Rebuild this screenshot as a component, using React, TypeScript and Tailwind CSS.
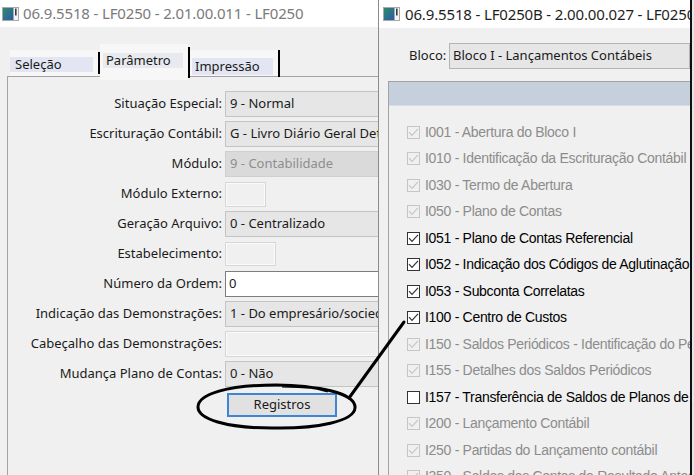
import React from "react";

type Row = {
  label: string;
  kind: "combo" | "disabled" | "box" | "text" | "blank";
  value?: string;
  box?: string;
};

const ROWS: Row[] = [
  { label: "Situação Especial:", kind: "combo", value: "9 - Normal" },
  { label: "Escrituração Contábil:", kind: "combo", value: "G - Livro Diário Geral Detalhado" },
  { label: "Módulo:", kind: "disabled", value: "9 - Contabilidade" },
  { label: "Módulo Externo:", kind: "box", box: "w-[41px] h-[25px]" },
  { label: "Geração Arquivo:", kind: "combo", value: "0 - Centralizado" },
  { label: "Estabelecimento:", kind: "box", box: "w-[51px] h-[24px]" },
  { label: "Número da Ordem:", kind: "text", value: "0" },
  { label: "Indicação das Demonstrações:", kind: "combo", value: "1 - Do empresário/sociedade" },
  { label: "Cabeçalho das Demonstrações:", kind: "blank" },
  { label: "Mudança Plano de Contas:", kind: "combo", value: "0 - Não" },
];

type State = "on" | "off" | "dis";

const ITEMS: [string, State][] = [
  ["I001 - Abertura do Bloco I", "dis"],
  ["I010 - Identificação da Escrituração Contábil", "dis"],
  ["I030 - Termo de Abertura", "dis"],
  ["I050 - Plano de Contas", "dis"],
  ["I051 - Plano de Contas Referencial", "on"],
  ["I052 - Indicação dos Códigos de Aglutinação", "on"],
  ["I053 - Subconta Correlatas", "on"],
  ["I100 - Centro de Custos", "on"],
  ["I150 - Saldos Periódicos - Identificação do Período", "dis"],
  ["I155 - Detalhes dos Saldos Periódicos", "dis"],
  ["I157 - Transferência de Saldos de Planos de Contas Anteriores", "off"],
  ["I200 - Lançamento Contábil", "dis"],
  ["I250 - Partidas do Lançamento contábil", "dis"],
  ["I350 - Saldos das Contas de Resultado Antes do Encerramento", "dis"],
];

function AppIcon() {
  return (
    <svg width="17" height="14" viewBox="0 0 17 14" className="shrink-0">
      <defs>
        <linearGradient id="ic" x1="0" y1="0" x2="1" y2="1">
          <stop offset="0" stopColor="#2e8a6a" />
          <stop offset="1" stopColor="#2c5aa6" />
        </linearGradient>
      </defs>
      <rect x="0.5" y="0.5" width="16" height="13" fill="#f4f4f4" stroke="#a8a8a8" />
      <rect x="1" y="1" width="10.5" height="12" fill="url(#ic)" />
      <rect x="13" y="1.5" width="1.6" height="7" fill="#3a3a3a" />
    </svg>
  );
}

function Check({ state }: { state: State }) {
  const dis = state === "dis";
  return (
    <span
      className={
        dis
          ? "flex h-[13px] w-[13px] shrink-0 items-center justify-center border border-[#c6c6c6] bg-[#f0f0f0]"
          : "flex h-[13px] w-[13px] shrink-0 items-center justify-center border border-[#333] bg-white"
      }
    >
      {state !== "off" && (
        <svg width="11" height="11" viewBox="0 0 11 11">
          <polyline
            points="1,5.2 4,8.4 10,1.8"
            fill="none"
            stroke={dis ? "#c6c6c6" : "#333"}
            strokeWidth="1.2"
          />
        </svg>
      )}
    </span>
  );
}

function Field({ row }: { row: Row }) {
  switch (row.kind) {
    case "combo":
      return (
        <div className="flex h-[26px] w-[170px] items-center whitespace-nowrap border border-[#c4c4c4] bg-[#e6e6e6] pl-[4px] text-[#1a1a1a]">
          {row.value}
        </div>
      );
    case "disabled":
      return (
        <div className="flex h-[26px] w-[170px] items-center whitespace-nowrap border border-[#cfcfcf] bg-[#dadada] pl-[4px] text-[#8e8e8e]">
          {row.value}
        </div>
      );
    case "text":
      return (
        <div className="flex h-[26px] w-[170px] items-center border border-[#7d7d7d] bg-white pl-[3px] text-[#1a1a1a]">
          {row.value}
        </div>
      );
    case "blank":
      return (
        <div className="h-[26px] w-[170px] border border-[#d6d6d6] bg-[#f0f0f0] shadow-[inset_0_0_0_1px_#fafafa]" />
      );
    default:
      return (
        <div
          className={`${row.box} border border-[#d6d6d6] bg-[#f0f0f0] shadow-[inset_0_0_0_1px_#fafafa]`}
        />
      );
  }
}

function LeftWindow() {
  return (
    <div className="flex h-full w-[378px] shrink-0 flex-col overflow-hidden bg-[#f0f0f0] font-['Noto_Sans',sans-serif] text-[13px] text-[#1a1a1a]">
      <div className="flex h-[27px] shrink-0 items-center gap-[4px] bg-white pl-[2px]">
        <AppIcon />
        <span className="whitespace-nowrap text-[15px] tracking-[-0.15px] text-[#7a7a7a]">
          06.9.5518 - LF0250 - 2.01.00.011 - LF0250
        </span>
      </div>

      <div className="flex h-[49px] shrink-0 items-end pl-[10px]">
        <div className="h-[26px] w-[88px] bg-[#f7f7f7] pt-[7px]">
          <div className="h-[15px] w-[83px] bg-[#e3e6f2] pl-[5px] leading-[15px]">Seleção</div>
        </div>
        <div className="mb-[2px] h-[22px] w-[2px] bg-black" />
        <div className="relative z-10 -mb-[4px] h-[36px] w-[88px] bg-[#f7f7f7] pl-[3px] pt-[9px]">
          <div className="h-[15px] w-[80px] bg-[#e8eaef] pl-[3px] leading-[15px]">Parâmetro</div>
        </div>
        <div className="relative z-10 -mb-[2px] h-[31px] w-[2px] bg-black" />
        <div className="h-[26px] w-[88px] bg-[#f7f7f7] pl-[2px] pt-[8px]">
          <div className="h-[17px] w-[81px] bg-[#e3e6f2] pl-[3px] leading-[17px]">Impressão</div>
        </div>
        <div className="relative z-10 -mb-[1px] h-[27px] w-[2px] bg-black" />
      </div>

      <div className="ml-[7px] flex-1 border-l border-t border-[#a3a3a3] pt-[14px]">
        <div className="grid grid-cols-[214px_auto] gap-x-[3px] gap-y-[4px]">
          {ROWS.map((r) => (
            <React.Fragment key={r.label}>
              <div className="flex h-[26px] items-center justify-end whitespace-nowrap">{r.label}</div>
              <div className="flex items-center">
                <Field row={r} />
              </div>
            </React.Fragment>
          ))}
          <div />
          <div className="pl-[2px] pt-[2px]">
            <div className="flex h-[24px] w-[110px] items-center justify-center border-2 border-[#3c86d4] bg-[#e1e1e1]">
              Registros
            </div>
          </div>
        </div>
      </div>
    </div>
  );
}

function RightWindow() {
  return (
    <div className="flex h-full w-[312px] shrink-0 flex-col overflow-hidden border-l border-[#8c8c8c] bg-[#f0f0f0] font-['Noto_Sans',sans-serif] text-[13px] text-[#1a1a1a]">
      <div className="flex h-[28px] shrink-0 items-center gap-[5px] bg-white pl-[4px]">
        <AppIcon />
        <span className="whitespace-nowrap text-[15px] tracking-[-0.15px] text-[#1e1e1e]">
          06.9.5518 - LF0250B - 2.00.00.027 - LF0250
        </span>
      </div>

      <div className="mt-[15px] flex h-[26px] shrink-0 items-center pl-[30px]">
        <span className="w-[40px] shrink-0">Bloco:</span>
        <div className="flex h-[26px] flex-1 items-center whitespace-nowrap border border-[#b4b4b4] bg-[#e6e6e6] pl-[3px]">
          Bloco I - Lançamentos Contábeis
        </div>
      </div>

      <div className="ml-[9px] mt-[12px] flex-1 border-l border-t border-[#a3a3a3]">
        <div className="h-[24px] border-b border-[#d6dde5] bg-[#c5d0dc]" />
        <div className="flex flex-col pl-[18px] pt-[13px] font-['Liberation_Sans',Arial,sans-serif] text-[14px] tracking-[-0.3px]">
          {ITEMS.map(([t, s]) => (
            <div key={t} className="flex h-[26.5px] items-center gap-[5px] whitespace-nowrap">
              <Check state={s} />
              <span className={s === "dis" ? "text-[#8c8c8c]" : "text-black"}>{t}</span>
            </div>
          ))}
        </div>
      </div>
    </div>
  );
}

export default function App() {
  return (
    <div className="relative flex h-[475px] w-[694px] overflow-hidden bg-white">
      <LeftWindow />
      <RightWindow />
      <div className="h-full w-[2px] shrink-0 bg-[#111]" />
      <div className="h-full w-[2px] shrink-0 bg-[#e6e6e6]" />

      {/* hand-drawn annotation */}
      <svg className="pointer-events-none absolute inset-0 z-20" width="694" height="475">
        <path
          d="M 282 386 C 330 386, 356 396, 355 408 C 354 421, 318 429, 272 428 C 226 428, 198 419, 198 407 C 198 394, 228 385, 276 385 C 300 385, 318 388, 328 391"
          fill="none"
          stroke="#000"
          strokeWidth="3"
        />
        <line x1="349" y1="398" x2="404" y2="322" stroke="#000" strokeWidth="3" strokeLinecap="round" />
      </svg>
    </div>
  );
}
